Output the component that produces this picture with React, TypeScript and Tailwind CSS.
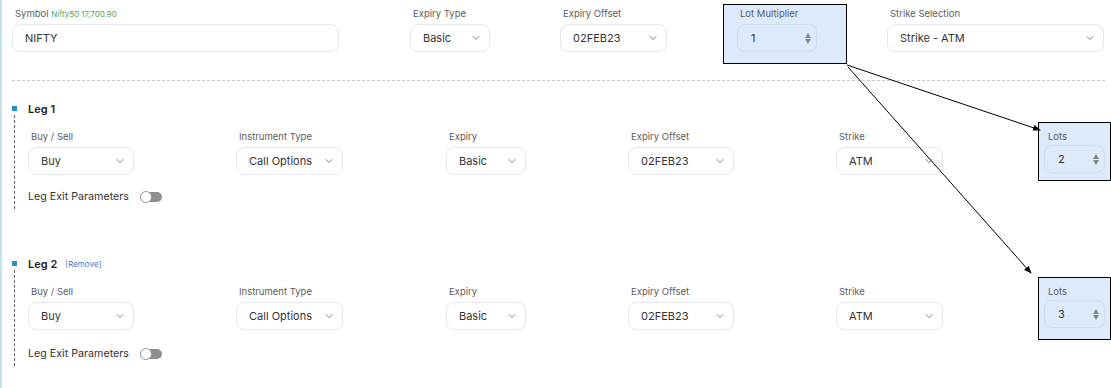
import { ChevronDown } from 'lucide-react';

function Select({ value, w }: { value: string; w: string }) {
  return (
    <div className={`${w} h-[28px] flex items-center justify-between rounded-lg border border-[#e5e7eb] bg-white pl-[12px] pr-[7px] text-[11px] text-[#333]`}>
      <span>{value}</span>
      <ChevronDown className="w-[12px] h-[12px] text-[#555]" strokeWidth={1.5} />
    </div>
  );
}

function NumberBox({ value, w }: { value: string; w: string }) {
  return (
    <div className={`${w} h-[28px] flex items-center justify-between rounded-lg border border-[#cfdbe8] bg-[#dceafb] pl-[13px] pr-[5px] text-[11px] text-[#333]`}>
      <span>{value}</span>
      <div className="flex flex-col gap-[1px] text-[#888]">
        <svg width="6" height="5" viewBox="0 0 6 5"><path d="M3 0L6 5H0z" fill="currentColor" /></svg>
        <svg width="6" height="5" viewBox="0 0 6 5"><path d="M0 0h6L3 5z" fill="currentColor" /></svg>
      </div>
    </div>
  );
}

function Label({ children, className = '' }: { children: React.ReactNode; className?: string }) {
  return <div className={`text-[9.5px] leading-[12px] text-[#5c5c5c] ml-[3px] ${className}`}>{children}</div>;
}

function Toggle() {
  return (
    <div className="w-[22px] h-[10px] rounded-full bg-[#8f8f8f] relative">
      <div className="absolute left-0 top-[-1px] w-[12px] h-[12px] rounded-full bg-white border border-[#9a9a9a]" />
    </div>
  );
}

function Leg({ n, lots, removable }: { n: number; lots: string; removable?: boolean }) {
  return (
    <div className="relative pl-[26px]">
      <div className="absolute left-[10px] top-[3px] w-[5px] h-[5px] bg-[#2b8fc7]" />
      <div className="absolute left-[12px] top-[12px] bottom-[-4px] border-l border-dashed border-[#666]" />
      <div className="flex items-center gap-[8px] h-[12px]">
        <span className="text-[11px] font-semibold text-[#222]">Leg {n}</span>
        {removable && <span className="text-[8px] text-[#4a7ac0]">[Remove]</span>}
      </div>
      <div className="flex items-start mt-[6px]">
        <div className="pt-[10px]">
          <Label className="mb-[4px]">Buy / Sell</Label>
          <Select value="Buy" w="w-[106px]" />
        </div>
        <div className="pt-[10px] ml-[102px]">
          <Label className="mb-[4px]">Instrument Type</Label>
          <Select value="Call Options" w="w-[107px]" />
        </div>
        <div className="pt-[10px] ml-[103px]">
          <Label className="mb-[4px]">Expiry</Label>
          <Select value="Basic" w="w-[80px]" />
        </div>
        <div className="pt-[10px] ml-[102px]">
          <Label className="mb-[4px]">Expiry Offset</Label>
          <Select value="02FEB23" w="w-[106px]" />
        </div>
        <div className="pt-[10px] ml-[102px]">
          <Label className="mb-[4px]">Strike</Label>
          <Select value="ATM" w="w-[107px]" />
        </div>
        <div className={`ml-[95px] mt-[1px] w-[74px] border border-black bg-[#dceafb] pl-[5px] pt-[8px] ${removable ? 'pb-[11px]' : 'pb-[7px]'}`}>
          <Label className="ml-[4px] mb-[2px]">Lots</Label>
          <NumberBox value={lots} w="w-[61px]" />
        </div>
      </div>
      <div className={`flex items-center gap-[11px] ${removable ? 'mt-[6px]' : 'mt-[8px]'}`}>
        <span className="text-[10.7px] text-[#333]">Leg Exit Parameters</span>
        <Toggle />
      </div>
    </div>
  );
}

export default function App() {
  return (
    <div className="relative w-[1111px] h-[388px] bg-white overflow-hidden border-l-2 border-[#c5e3ea]" style={{ fontFamily: 'Inter, "Noto Sans", sans-serif' }}>
      <div className="flex items-start pt-[8px] pl-[10px]">
        <div>
          <Label className="ml-[2px] mb-[4px]">
            Symbol <span className="text-[8px] text-[#5aa05a]">Nifty50 17,700.90</span>
          </Label>
          <div className="w-[327px] h-[28px] flex items-center rounded-lg border border-[#e5e7eb] pl-[12px] text-[11px] text-[#333]">NIFTY</div>
        </div>
        <div className="ml-[71px]">
          <Label className="mb-[4px]">Expiry Type</Label>
          <Select value="Basic" w="w-[80px]" />
        </div>
        <div className="ml-[70px]">
          <Label className="mb-[4px]">Expiry Offset</Label>
          <Select value="02FEB23" w="w-[107px]" />
        </div>
        <div className="ml-[56px] -mt-[4px] w-[124px] h-[60px] border border-black bg-[#dceafb] pl-[13px] pt-[3px]">
          <Label className="mb-[4px]">Lot Multiplier</Label>
          <NumberBox value="1" w="w-[80px]" />
        </div>
        <div className="ml-[40px]">
          <Label className="mb-[4px]">Strike Selection</Label>
          <Select value="Strike - ATM" w="w-[217px]" />
        </div>
      </div>
      <div className="ml-[10px] mr-[6px] mt-[16px] border-t border-dashed border-[#c8c8c8]" />
      <div className="mt-[22px]">
        <Leg n={1} lots="2" />
      </div>
      <div className="mt-[53px]">
        <Leg n={2} lots="3" removable />
      </div>
      <svg className="absolute inset-0 pointer-events-none" width="1111" height="388">
        <defs>
          <marker id="ah" markerWidth="8" markerHeight="6" refX="7" refY="3" orient="auto">
            <path d="M0 0L8 3L0 6z" fill="#000" />
          </marker>
        </defs>
        <line x1="845" y1="65" x2="1038" y2="130" stroke="#000" strokeWidth="1" markerEnd="url(#ah)" />
        <line x1="846" y1="67" x2="1029" y2="273" stroke="#000" strokeWidth="1" markerEnd="url(#ah)" />
      </svg>
    </div>
  );
}
